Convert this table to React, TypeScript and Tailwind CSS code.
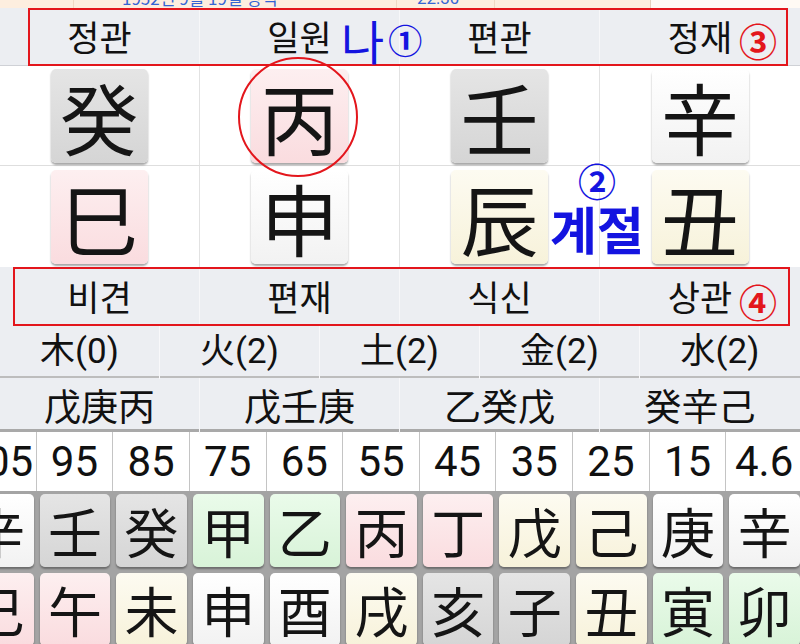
import React from 'react';

type Tone = 'gray' | 'pink' | 'white' | 'yellow' | 'green';

const toneClass: Record<Tone, string> = {
  gray: 'from-[#e5e5e5] to-[#d5d5d5]',
  pink: 'from-[#fdeff0] to-[#fadcdf]',
  white: 'from-[#ffffff] to-[#f2f2f2]',
  yellow: 'from-[#fdfbf1] to-[#f7f2da]',
  green: 'from-[#eafbea] to-[#d8f3d8]',
};

const cjk = "font-['Noto_Sans_CJK_KR',sans-serif]";

const pillarStems: { c: string; t: Tone }[] = [
  { c: '癸', t: 'gray' },
  { c: '丙', t: 'pink' },
  { c: '壬', t: 'gray' },
  { c: '辛', t: 'white' },
];

const pillarBranches: { c: string; t: Tone }[] = [
  { c: '巳', t: 'pink' },
  { c: '申', t: 'white' },
  { c: '辰', t: 'yellow' },
  { c: '丑', t: 'yellow' },
];

const luckAges = ['105', '95', '85', '75', '65', '55', '45', '35', '25', '15', '4.6'];

const luckStems: { c: string; t: Tone }[] = [
  { c: '辛', t: 'white' },
  { c: '壬', t: 'gray' },
  { c: '癸', t: 'gray' },
  { c: '甲', t: 'green' },
  { c: '乙', t: 'green' },
  { c: '丙', t: 'pink' },
  { c: '丁', t: 'pink' },
  { c: '戊', t: 'yellow' },
  { c: '己', t: 'yellow' },
  { c: '庚', t: 'white' },
  { c: '辛', t: 'white' },
];

const luckBranches: { c: string; t: Tone }[] = [
  { c: '巳', t: 'pink' },
  { c: '午', t: 'pink' },
  { c: '未', t: 'yellow' },
  { c: '申', t: 'white' },
  { c: '酉', t: 'white' },
  { c: '戌', t: 'yellow' },
  { c: '亥', t: 'gray' },
  { c: '子', t: 'gray' },
  { c: '丑', t: 'yellow' },
  { c: '寅', t: 'green' },
  { c: '卯', t: 'green' },
];

const Tile = ({ c, t, big }: { c: string; t: Tone; big?: boolean }) => (
  <div
    className={`flex items-center justify-center bg-linear-to-b ${toneClass[t]} rounded-[5px] shadow-[0_2px_2px_rgba(0,0,0,0.35)] ${cjk} text-[#151515] ${
      big ? 'w-[97px] h-[94px] text-[78px] leading-none' : 'w-full h-[73px] text-[54px] leading-none'
    }`}
  >
    {c}
  </div>
);

const FourRow = ({ items, className }: { items: string[]; className: string }) => (
  <div className={`grid grid-cols-4 ${className}`}>
    {items.map((s, i) => (
      <div
        key={i}
        className={`flex items-center justify-center ${i < 3 ? 'border-r border-[#f7f7f9]' : ''}`}
      >
        {s}
      </div>
    ))}
  </div>
);

export default function App() {
  return (
    <div className="relative w-[800px] h-[644px] overflow-hidden bg-white text-[#111]">
      {/* cropped header strip */}
      <div className="flex h-[8px] overflow-hidden bg-[#fdeedf]">
        <div className="w-[74px] border-r border-[#f0d9c4]" />
        <div className="w-[323px] border-r border-[#f0d9c4] pl-[48px]">
          <div className={`-mt-[12px] text-[17px] leading-[20px] text-[#3565d4] ${cjk}`}>
            1952년 9월 19일 양력
          </div>
        </div>
        <div className="w-[98px] border-r border-[#f0d9c4] pl-[20px]">
          <div className="-mt-[12px] text-[17px] leading-[20px] text-[#3565d4] font-['Roboto',sans-serif]">
            22:30
          </div>
        </div>
        <div className="w-[155px]" />
        <div className="flex-1 border-l border-[#e5d2bf] bg-[#fffaf4]" />
      </div>

      {/* 십성 (천간) */}
      <FourRow
        items={['정관', '일원', '편관', '정재']}
        className={`h-[58px] bg-[#eceef2] border-b border-[#cfd1d6] text-[35px] ${cjk}`}
      />

      {/* 천간 / 지지 */}
      <div className="grid grid-cols-4 h-[100px] border-b border-[#dedede]">
        {pillarStems.map((s, i) => (
          <div key={i} className={`flex items-center justify-center ${i < 3 ? 'border-r border-[#e2e2e2]' : ''}`}>
            <Tile c={s.c} t={s.t} big />
          </div>
        ))}
      </div>
      <div className="grid grid-cols-4 h-[101px]">
        {pillarBranches.map((s, i) => (
          <div key={i} className={`flex items-center justify-center ${i < 3 ? 'border-r border-[#e2e2e2]' : ''}`}>
            <Tile c={s.c} t={s.t} big />
          </div>
        ))}
      </div>

      {/* 십성 (지지) */}
      <FourRow
        items={['비견', '편재', '식신', '상관']}
        className={`h-[59px] bg-[#eceef2] text-[35px] ${cjk}`}
      />

      {/* 오행 */}
      <div className="grid grid-cols-5 h-[52px] bg-[#eceef2] border-b-2 border-[#bdbdbd] text-[35px] font-['Roboto','Noto_Sans_CJK_KR',sans-serif]">
        {['木(0)', '火(2)', '土(2)', '金(2)', '水(2)'].map((s, i) => (
          <div key={i} className={`flex items-center justify-center ${i < 4 ? 'border-r border-[#f8f8fa]' : ''}`}>
            {s}
          </div>
        ))}
      </div>

      {/* 지장간 */}
      <FourRow
        items={['戊庚丙', '戊壬庚', '乙癸戊', '癸辛己']}
        className={`h-[54px] bg-[#eceef2] border-b-[3px] border-[#a9a9a9] text-[37px] ${cjk}`}
      />

      {/* 대운 */}
      <div className="w-[843px] -ml-[40px]">
        <div className="grid grid-cols-11 h-[59px] bg-white">
          {luckAges.map((a, i) => (
            <div
              key={i}
              className="flex items-center justify-center border-r border-[#c4c4c4] text-[42px] leading-none font-['Roboto',sans-serif]"
            >
              {a}
            </div>
          ))}
        </div>
        <div className="grid grid-cols-11 gap-y-[6px] bg-[#a4a4a4] pt-[3px] pb-[6px]">
          {luckStems.map((s, i) => (
            <div key={`s${i}`} className="px-[3px]">
              <Tile c={s.c} t={s.t} />
            </div>
          ))}
          {luckBranches.map((s, i) => (
            <div key={`b${i}`} className="px-[3px]">
              <Tile c={s.c} t={s.t} />
            </div>
          ))}
        </div>
      </div>

      {/* annotations */}
      <div className="absolute left-[28px] top-[8px] w-[760px] h-[58px] border-2 border-[#e3161c]" />
      <div className="absolute left-[13px] top-[267px] w-[777px] h-[59px] border-2 border-[#e3161c]" />
      <div className="absolute left-[238px] top-[57px] w-[120px] h-[120px] rounded-full border-2 border-[#e3161c]" />

      <div className={`absolute left-[341px] top-[12px] flex items-center text-[#1414e0] ${cjk}`}>
        <span className="text-[47px] leading-[56px]">나</span>
        <span className="ml-[4px] text-[34px] leading-[56px] font-bold">①</span>
      </div>
      <div className={`absolute left-[739px] top-[20px] text-[38px] leading-[40px] font-bold text-[#e3161c] ${cjk}`}>③</div>
      <div className={`absolute left-[739px] top-[281px] text-[38px] leading-[40px] font-bold text-[#e3161c] ${cjk}`}>④</div>
      <div className={`absolute left-[550px] top-[162px] flex flex-col items-center font-bold text-[#1414e0] ${cjk}`}>
        <span className="text-[38px] leading-[36px]">②</span>
        <span className="text-[51px] leading-[60px]">계절</span>
      </div>
    </div>
  );
}
